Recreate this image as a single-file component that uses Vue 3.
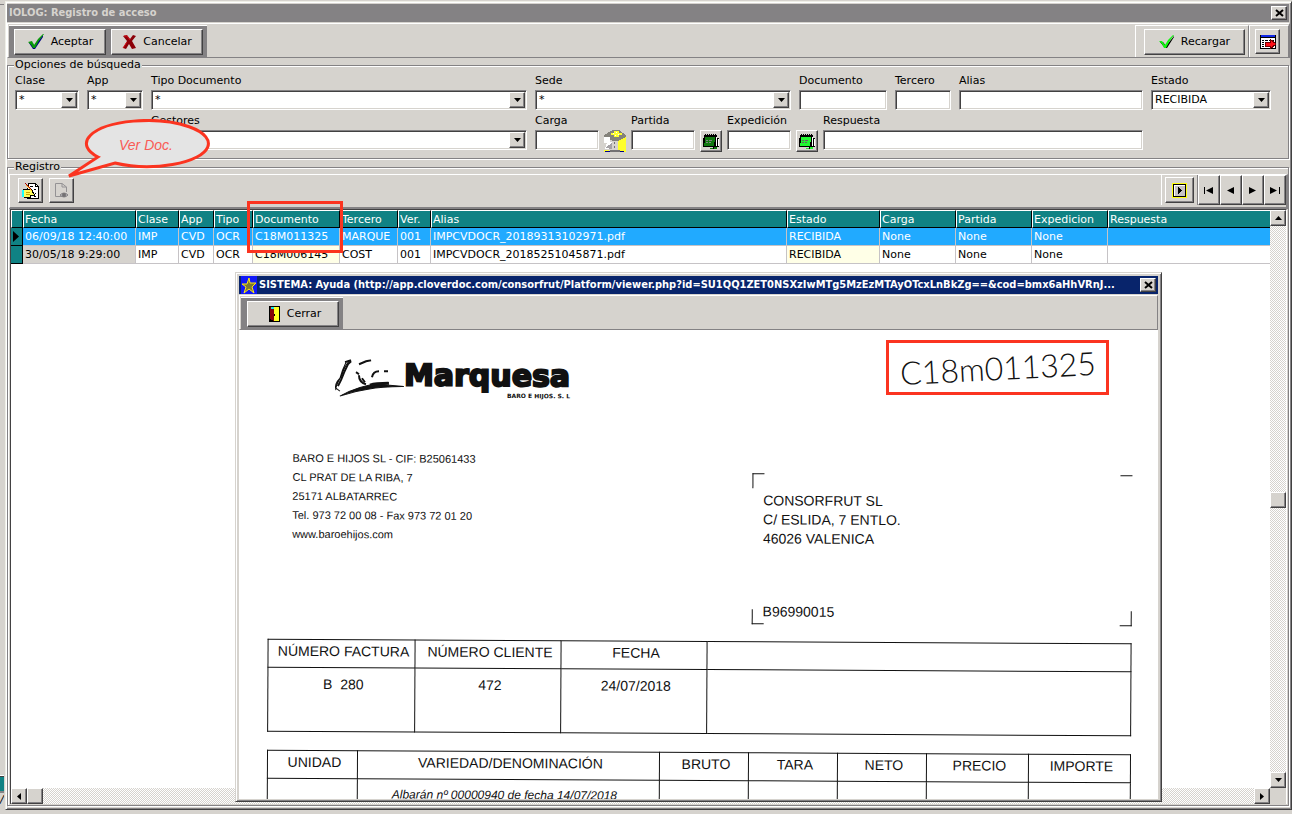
<script setup>
import { ref } from 'vue'

const topFields = [
  { id: 'clase', label: 'Clase', value: '*', select: true },
  { id: 'app', label: 'App', value: '*', select: true },
  { id: 'tipo', label: 'Tipo Documento', value: '*', select: true },
  { id: 'sede', label: 'Sede', value: '*', select: true },
  { id: 'documento', label: 'Documento', value: '' },
  { id: 'tercero', label: 'Tercero', value: '' },
  { id: 'alias', label: 'Alias', value: '' },
  { id: 'estado', label: 'Estado', value: 'RECIBIDA', select: true },
]

const columns = [
  { name: 'Fecha', cls: 'c-fecha' },
  { name: 'Clase', cls: 'c-clase' },
  { name: 'App', cls: 'c-app' },
  { name: 'Tipo', cls: 'c-tipo' },
  { name: 'Documento', cls: 'c-doc' },
  { name: 'Tercero', cls: 'c-tercero' },
  { name: 'Ver.', cls: 'c-ver' },
  { name: 'Alias', cls: 'c-alias' },
  { name: 'Estado', cls: 'c-estado' },
  { name: 'Carga', cls: 'c-short' },
  { name: 'Partida', cls: 'c-short' },
  { name: 'Expedicion', cls: 'c-short' },
  { name: 'Respuesta', cls: 'c-resp' },
]

const rows = [
  ['06/09/18 12:40:00', 'IMP', 'CVD', 'OCR', 'C18M011325', 'MARQUE', '001', 'IMPCVDOCR_20189313102971.pdf', 'RECIBIDA', 'None', 'None', 'None', ''],
  ['30/05/18 9:29:00', 'IMP', 'CVD', 'OCR', 'C18M006145', 'COST', '001', 'IMPCVDOCR_20185251045871.pdf', 'RECIBIDA', 'None', 'None', 'None', ''],
]
const selected = ref(0)

const navButtons = [
  { label: 'Primero', d: 'M0 0h1v7H0zM9 0v7L2 3.5z' },
  { label: 'Anterior', d: 'M8 0v7L1 3.5z' },
  { label: 'Siguiente', d: 'M1 0v7l7-3.5z' },
  { label: 'Último', d: 'M0 0v7l7-3.5zM9 0h1v7H9z' },
]

const lineHeads = ['UNIDAD', 'VARIEDAD/DENOMINACIÓN', 'BRUTO', 'TARA', 'NETO', 'PRECIO', 'IMPORTE']
</script>

<template>
  <div class="desktop">
    <div class="behind" aria-hidden="true"><i class="behind-top"></i><i class="behind-teal"></i><i class="behind-foot">/</i></div>

    <main class="window">
      <header class="titlebar">
        <h1>IOLOG: Registro de acceso</h1>
        <button class="close" aria-label="Cerrar ventana">
          <svg width="9" height="8" viewBox="0 0 9 8"><path d="M1 1l7 6M8 1L1 7" fill="none" stroke="#000" stroke-width="2" /></svg>
        </button>
      </header>

      <div class="toolbar">
        <div class="dark-group">
          <button class="btn wide">
            <svg width="18" height="16" viewBox="0 0 18 16">
              <path d="M2 9l4 0 1 3L16 1v2L8 15H6z" fill="#000084" />
              <path d="M1 8l4-1 2 4Q11 4 16 0h1Q11 7 8 14H6Q4 10 1 8z" fill="#089a08" />
            </svg>
            Aceptar
          </button>
          <button class="btn wide">
            <svg width="15" height="16" viewBox="0 0 15 16">
              <path d="M1 2l4-1 3 4 3-4 3 1-4 5 4 7-4 1-3-5-3 5-3-1 4-7z" fill="#8c0008" />
              <path d="M2 2l3 0 3 4M5 8l-4 6" fill="none" stroke="#d61018" stroke-width="1" />
            </svg>
            Cancelar
          </button>
        </div>
        <div class="tool-right">
          <div class="tool-cell">
            <button class="btn reload">
              <svg width="16" height="14" viewBox="0 0 16 14">
                <path d="M1 7h3l3 4L15 1v1L8 13H6z" fill="#000" />
                <path d="M0 6h3l3 4Q9 4 14 0h1Q10 6 7 13H5Q3 8 0 6z" fill="#10f710" />
              </svg>
              Recargar
            </button>
          </div>
          <div class="tool-cell last">
            <button class="btn square" aria-label="Exportar">
              <svg width="16" height="14" viewBox="0 0 16 14" shape-rendering="crispEdges">
                <path d="M0 0h16v14H0z" fill="#000" />
                <path d="M1 3h14v10H1z" fill="#fff" />
                <path d="M1 0h14v2H1z" fill="#1028e7" />
                <path d="M2 5h2v1H2zM5 5h3v1H5zM9 5h5v1H9zM2 7h2v1H2zM5 7h2v1H5zM2 9h2v1H2zM2 11h2v1H2z" fill="#000" />
                <path d="M5 7h5V4l6 5-6 5v-3H5z" fill="#ff1018" stroke="#730000" stroke-width="1" />
              </svg>
            </button>
          </div>
        </div>
      </div>

      <fieldset class="search">
        <legend>Opciones de búsqueda</legend>
        <div class="row-one">
          <div v-for="f in topFields" :key="f.id" class="field">
            <label :for="f.id">{{ f.label }}</label>
            <div v-if="f.select" class="combo">
              <select :id="f.id"><option>{{ f.value }}</option></select>
              <span class="arrow"><svg width="7" height="4" viewBox="0 0 7 4"><path d="M0 0h7L3.500 4z" /></svg></span>
            </div>
            <input v-else :id="f.id" type="text" :value="f.value">
          </div>
        </div>
        <div class="row-two">
          <div class="field gestores">
            <label for="gestores">Gestores</label>
            <div class="combo">
              <select id="gestores"><option></option></select>
              <span class="arrow"><svg width="7" height="4" viewBox="0 0 7 4"><path d="M0 0h7L3.500 4z" /></svg></span>
            </div>
          </div>
          <div class="lookup">
            <div class="field small"><label for="carga">Carga</label><input id="carga" type="text"></div>
            <button class="plain" aria-label="Buscar carga">
              <svg width="22" height="22" viewBox="0 0 22 22" shape-rendering="crispEdges">
                <path d="M0 0h22v22H0z" fill="#d6d3ce" />
                <path d="M0 5L9 0h6l7 5v2l-8 4H9L0 7z" fill="#84827b" />
                <path d="M0 7h6v6H0zM3 12h5v7H1z" fill="#fff" />
                <path d="M1 18l7-5v6z" fill="#a5a2a5" />
                <path d="M14 11l8-4v13l-8 1z" fill="#ffff29" />
                <path d="M7 3h3V1h5v2h3v2h-3v2h-5V5H7z" fill="#ffff29" />
                <path d="M9 3h1v1H9zM12 2h1v1h-1zM14 4h1v1h-1zM11 5h1v1h-1z" fill="#fff" />
                <path d="M0 20h5v2H0zM17 20h5v2h-5z" fill="#ffff29" />
                <path d="M1 21h5v1H1zM16 21h4v1h-4z" fill="#000084" />
                <path d="M6 20h10v2H6zM10 12h1v2h-1zM10 16h1v2h-1z" fill="#737173" />
              </svg>
            </button>
            <div class="field small"><label for="partida">Partida</label><input id="partida" type="text"></div>
            <button class="btn mini green" aria-label="Buscar partida">
              <svg width="17" height="17" viewBox="0 0 17 17" shape-rendering="crispEdges">
                <path d="M1 2h13v3h2v9h-2v2h-4v-2H0V5h1z" fill="#000" />
                <path d="M2 4h10v2l-1 7H1l1-6z" fill="currentColor" />
                <path d="M2 1h1v2H2zM4 1h1v2H4zM6 1h1v2H6zM8 1h1v2H8zM10 1h1v2h-1zM12 1h1v2h-1z" fill="#000" />
                <path d="M3 7h2v1H3zM6 7h3v1H6zM3 9h2v1H3zM6 9h2v1H6z" fill="#848284" />
                <path d="M13 4h1v9h-1zM15 6h1v7h-1z" fill="#fff" />
                <path d="M7 15h3v1H7zM11 14h3v2h-3z" fill="currentColor" />
              </svg>
            </button>
            <div class="field small"><label for="expedicion">Expedición</label><input id="expedicion" type="text"></div>
            <button class="btn mini lime" aria-label="Buscar expedición">
              <svg width="17" height="17" viewBox="0 0 17 17" shape-rendering="crispEdges">
                <path d="M1 2h13v3h2v9h-2v2h-4v-2H0V5h1z" fill="#000" />
                <path d="M2 4h10v2l-1 7H1l1-6z" fill="currentColor" />
                <path d="M2 1h1v2H2zM4 1h1v2H4zM6 1h1v2H6zM8 1h1v2H8zM10 1h1v2h-1zM12 1h1v2h-1z" fill="#000" />
                <path d="M3 7h2v1H3zM6 7h3v1H6zM3 9h2v1H3zM6 9h2v1H6z" fill="#636163" />
                <path d="M13 4h1v9h-1zM15 6h1v7h-1z" fill="#fff" />
                <path d="M7 15h3v1H7zM11 14h3v2h-3z" fill="currentColor" />
              </svg>
            </button>
            <div class="field grow"><label for="respuesta">Respuesta</label><input id="respuesta" type="text"></div>
          </div>
        </div>
      </fieldset>

      <fieldset class="registry">
        <legend>Registro</legend>
        <div class="registry-tools">
          <button class="btn square" aria-label="Editar registro">
            <svg width="17" height="17" viewBox="0 0 17 17" shape-rendering="crispEdges">
              <path d="M7 1h6l3 3v12H5v-4z" fill="#fff" stroke="#000" />
              <path d="M13 1v3h3M8 4h3M8 7h2M12 7h2M10 10h2M13 11h1M8 13h3M12 14h2" fill="none" stroke="#000" />
              <path d="M1 7h6l3 1v2l3 3-2 1-3-1v2H2z" fill="#ffff5a" stroke="#000" />
              <path d="M0 8h2v7H0z" fill="#18ffff" />
              <path d="M3 1l6 6" stroke="#a50000" stroke-width="1" />
              <path d="M4 3l6 6" stroke="#ffb210" stroke-width="1" />
              <path d="M4 10h4M4 12h4" stroke="#c6a200" stroke-width="1" />
            </svg>
          </button>
          <button class="btn square" aria-label="Ver documento">
            <svg width="16" height="17" viewBox="0 0 16 17">
              <path d="M8 14.500H1.500v-13H8L12.500 5v5M8 1.500V5h4.500" fill="none" stroke="#949294" />
              <path d="M6 13q4-4 8 0-4 4-8 0z" fill="#bdbabd" stroke="#848284" />
              <circle cx="10" cy="13" r="2" fill="#737173" />
            </svg>
          </button>
          <div class="nav">
            <div class="nav-cell">
              <button class="btn play" aria-label="Ejecutar">
                <svg width="15" height="15" viewBox="0 0 15 15" shape-rendering="crispEdges">
                  <path d="M0 0h15v15H0z" fill="#ffff10" /><path d="M1 1h13v13H1z" /><path d="M2 2h11v11H2z" fill="#fff" /><path d="M3 3h10v10H3z" fill="#c6c3c6" /><path d="M6 4v7l4-3.500z" />
                </svg>
              </button>
            </div>
            <button v-for="n in navButtons" :key="n.label" class="btn step" :aria-label="n.label">
              <svg width="10" height="7" viewBox="0 0 10 7"><path :d="n.d" /></svg>
            </button>
          </div>
        </div>

        <div class="grid">
          <div class="grid-main">
            <table>
              <colgroup>
                <col class="c-mark"><col v-for="c in columns" :key="c.name" :class="c.cls">
              </colgroup>
              <thead>
                <tr><th></th><th v-for="c in columns" :key="c.name" scope="col">{{ c.name }}</th></tr>
              </thead>
              <tbody>
                <tr v-for="(r, i) in rows" :key="r[4]" :class="{ active: i === selected }" @click="selected = i">
                  <td class="mark"><svg v-if="i === selected" width="6" height="11" viewBox="0 0 6 11"><path d="M0 0v11l6-5.500z" /></svg></td>
                  <td v-for="(v, k) in r" :key="k" :class="{ gray: k === 0, cream: k === 4 || k === 8 }">{{ v }}</td>
                </tr>
              </tbody>
            </table>
            <div class="hbar">
              <button class="btn sb" aria-label="Izquierda"><svg width="4" height="7" viewBox="0 0 4 7"><path d="M4 0v7L0 3.500z" /></svg></button>
              <span class="btn sb"></span>
              <i></i>
              <button class="btn sb" aria-label="Derecha"><svg width="4" height="7" viewBox="0 0 4 7"><path d="M0 0v7l4-3.500z" /></svg></button>
            </div>
          </div>
          <div class="vbar">
            <button class="btn sb" aria-label="Arriba"><svg width="7" height="4" viewBox="0 0 7 4"><path d="M0 4h7L3.500 0z" /></svg></button>
            <i></i>
            <span class="btn sb"></span>
            <i class="low"></i>
            <button class="btn sb" aria-label="Abajo"><svg width="7" height="4" viewBox="0 0 7 4"><path d="M0 0h7L3.500 4z" /></svg></button>
            <b class="corner"></b>
          </div>
        </div>
      </fieldset>
    </main>

    <section class="dialog" role="dialog" aria-labelledby="viewer-title">
      <header class="titlebar blue">
        <svg class="star" width="16" height="18" viewBox="0 0 16 18">
          <path d="M0 0h16v18H0z" fill="#1018f7" />
          <path d="M8 2l1 5 6 0-4 4 2 6-5-4-5 4 2-6-4-3h5z" fill="#7b7931" stroke="#ffe710" stroke-width="1" />
        </svg>
        <h2 id="viewer-title">SISTEMA: Ayuda (http://app.cloverdoc.com/consorfrut/Platform/viewer.php?id=SU1QQ1ZET0NSXzIwMTg5MzEzMTAyOTcxLnBkZg==&amp;cod=bmx6aHhVRnJ...</h2>
        <button class="close" aria-label="Cerrar visor">
          <svg width="9" height="8" viewBox="0 0 9 8"><path d="M1 1l7 6M8 1L1 7" fill="none" stroke="#000" stroke-width="2" /></svg>
        </button>
      </header>
      <div class="dialog-tools">
        <div class="dark-group">
          <button class="btn wide">
            <svg width="16" height="16" viewBox="0 0 16 16" shape-rendering="crispEdges">
              <path d="M4 0h11v16H4z" fill="#000" />
              <path d="M8 1h6v14H8z" fill="#ffff21" />
              <path d="M5 1l4 2v12l-4-2z" fill="#840008" />
              <path d="M6 1h3v2H6z" fill="#18e7e7" />
              <path d="M9 8h1v2H9z" fill="#000" />
            </svg>
            Cerrar
          </button>
        </div>
      </div>
      <div class="viewer">
        <article class="sheet">
          <div class="logo">
            <svg width="70" height="42" viewBox="0 0 70 42" fill="none" stroke="#111">
              <path d="M15 2q-5 6-7 14-5 8-6 13l4 3M12 3Q8 11 6 19 0 25 2 31" stroke-width="1" />
              <path d="M17 2l-3 3q-4 8-7 16l-3 6" stroke-width="2" />
              <path d="M11 3l6-2M25 5l7-3 5-1M22 13l3 2M25 16q0 7 7 9M28 19l3 4M38 18q1-6 7-6M50 12l4 0" stroke-width="2" />
              <path d="M6 37q20-11 38-12l26 2q-22 0-36 3Q20 32 6 37z" fill="#111" stroke-width="1" />
              <path d="M36 26q6-2 19-2" stroke-width="3" />
            </svg>
            <div class="brand"><strong>Marquesa</strong><small>BARO E HIJOS. S. L</small></div>
          </div>
          <div class="parties">
            <address>
              BARO E HIJOS SL - CIF: B25061433<br>CL PRAT DE LA RIBA, 7<br>25171 ALBATARREC<br>Tel. 973 72 00 08 - Fax 973 72 01 20<br>www.baroehijos.com
            </address>
            <div class="recipient">
              <p>CONSORFRUT SL<br>C/ ESLIDA, 7 ENTLO.<br>46026 VALENICA</p>
              <p>B96990015</p>
            </div>
          </div>
          <table class="ink invoice">
            <colgroup><col class="i1"><col class="i2"><col class="i2"><col></colgroup>
            <thead><tr><th>NÚMERO FACTURA</th><th>NÚMERO CLIENTE</th><th>FECHA</th><th></th></tr></thead>
            <tbody><tr><td>B&nbsp; 280</td><td>472</td><td>24/07/2018</td><td></td></tr></tbody>
          </table>
          <table class="ink lines">
            <colgroup><col class="l1"><col><col class="l3"><col class="l3"><col class="l3"><col class="l6"><col class="l6"></colgroup>
            <thead><tr><th v-for="h in lineHeads" :key="h">{{ h }}</th></tr></thead>
            <tbody><tr><td></td><td class="note">Albarán nº 00000940 de fecha 14/07/2018</td><td></td><td></td><td></td><td></td><td></td></tr></tbody>
          </table>
        </article>
        <div class="handnote"><span>C18m011325</span></div>
      </div>
    </section>

    <div class="highlight" aria-hidden="true"></div>
    <div class="callout">
      <svg width="150" height="62" viewBox="0 0 150 62">
        <path d="M32 38A61 23 0 1 1 49 44L3 57z" fill="#e4e4e4" stroke="#fb3420" stroke-width="3" />
      </svg>
      <span>Ver Doc.</span>
    </div>
  </div>
</template>

<style>
body { background: #d6d3ce; }
</style>

<style scoped>
* { box-sizing: border-box; }
.desktop {
  position: relative;
  display: flex;
  min-height: 100vh;
  padding: 1px 0 4px;
  background: #d6d3ce;
  font: 11px/14px Verdana, "DejaVu Sans", sans-serif;
  color: #000;
  overflow: hidden;
}
h1, h2, p { margin: 0; font: inherit; }
button, input, select { font: inherit; color: inherit; margin: 0; border-radius: 0; }
svg { display: block; flex: none; }

.behind { width: 5px; flex: none; display: flex; flex-direction: column; padding-right: 1px; }
.behind-top { flex: 1; background: linear-gradient(#848284, #848284) 0 3px / 100% 1px no-repeat; border-bottom: 1px solid #fff; }
.behind-teal { height: 15px; background: #108284; border-top: 1px solid #424142; }
.behind-foot { height: 19px; overflow: hidden; border-top: 2px solid #848284; }

.window {
  flex: 1;
  min-width: 0;
  display: flex;
  flex-direction: column;
  padding: 1px 1px 2px 1px;
  border: 1px solid;
  border-color: #efefe7 #424142 #424142 #efefe7;
  box-shadow: inset 1px 1px 0 #fff, inset -1px -1px 0 #848284;
}
.titlebar {
  display: flex;
  align-items: center;
  height: 18px;
  margin: 1px 1px 1px 0;
  padding: 0 2px;
  background: #848284;
  color: #d6d3ce;
  flex: none;
}
.titlebar h1, .titlebar h2 {
  flex: 1;
  min-width: 0;
  font: bold 11px/18px Tahoma, "DejaVu Sans Condensed", "DejaVu Sans", sans-serif;
  white-space: nowrap;
  overflow: hidden;
}
.close {
  width: 16px; height: 14px; flex: none; padding: 0;
  display: grid; place-items: center;
  background: #d6d3ce; color: #000;
  border: 1px solid; border-color: #fff #424142 #424142 #fff;
  box-shadow: inset -1px -1px 0 #848284;
}
.btn {
  display: flex; align-items: center; justify-content: center;
  padding: 0; gap: 6px;
  background: #d6d3ce;
  border: 1px solid; border-color: #fff #424142 #424142 #fff;
  box-shadow: inset -1px -1px 0 #848284;
}
.wide { width: 92px; height: 26px; }
.reload { width: 101px; height: 26px; }
.square { width: 25px; height: 25px; }
.mini { width: 22px; height: 22px; flex: none; }
.plain { width: 22px; height: 22px; padding: 0; border: 0; flex: none; }
.green { color: #107910; }
.lime { color: #21f731; }

.toolbar {
  display: flex;
  justify-content: space-between;
  height: 35px;
  border-top: 1px solid #fff;
  border-bottom: 1px solid #848284;
  border-left: 1px solid #fff;
  border-right: 1px solid #848284;
  flex: none;
}
.dark-group {
  display: flex; align-items: center; gap: 5px;
  margin: 1px 0 0 1px; padding: 0 4px 0 5px;
  background: #848284;
  border-top: 1px solid #fff;
}
.tool-right { display: flex; padding-top: 1px; }
.tool-cell { display: flex; align-items: center; padding: 0 3px 0 8px; border-top: 1px solid #fff; border-left: 1px solid #fff; border-right: 1px solid #848284; }
.tool-cell.last { padding: 0 8px 0 5px; }

fieldset {
  margin: 0 1px 1px 0;
  padding: 0;
  min-width: 0;
  border: 1px solid #848284;
  box-shadow: 1px 1px 0 #fff, inset 1px 1px 0 #fff;
}
legend { padding: 0 1px; line-height: 14px; background: #d6d3ce; }
.search { padding: 2px 17px 8px 7px; flex: none; }
.search legend { margin-left: -1px; }
.registry legend { margin-left: 5px; }
.row-one { display: grid; gap: 8px; grid-template-columns: minmax(0, 64fr) minmax(0, 56fr) minmax(0, 376fr) minmax(0, 256fr) minmax(0, 88fr) minmax(0, 56fr) minmax(0, 184fr) minmax(0, 120fr); }
.row-two { display: grid; gap: 8px; grid-template-columns: minmax(0, 128fr) minmax(0, 376fr) minmax(0, 608fr) minmax(0, 120fr); margin-top: 4px; }
.gestores { grid-column: 2; }
.lookup { display: flex; gap: 5px; align-items: flex-end; }
.lookup .plain, .lookup .mini { margin-bottom: -2px; }
.field { display: flex; flex-direction: column; min-width: 0; }
.field.small { width: 64px; }
.field.grow { flex: 1; }
.field label { height: 16px; line-height: 14px; }
.field input, .combo select {
  width: 100%; height: 20px; padding: 0 3px;
  background: #fff;
  border: 1px solid; border-color: #848284 #fff #fff #848284;
  box-shadow: inset 1px 1px 0 #424142, inset -1px -1px 0 #d6d3ce;
  outline: 0;
}
.combo { position: relative; }
.combo select { appearance: none; display: block; }
.arrow {
  position: absolute; top: 2px; right: 2px; width: 16px; height: 16px;
  display: grid; place-items: center; pointer-events: none;
  background: #d6d3ce; border: 1px solid; border-color: #fff #424142 #424142 #fff;
  box-shadow: inset -1px -1px 0 #848284;
}

.registry { flex: 1; display: flex; flex-direction: column; padding: 0 0 1px 1px; }
.registry-tools {
  display: flex; align-items: center; gap: 6px;
  height: 35px; flex: none;
  padding: 0 0 2px 8px;
  border-top: 1px solid #fff; border-left: 1px solid #fff;
  border-right: 2px solid #848284; border-bottom: 2px solid #848284;
}
.nav { display: flex; margin-left: auto; align-self: stretch; }
.nav-cell { display: flex; align-items: center; padding: 0 3px; border-left: 1px solid #fff; border-right: 1px solid #848284; }
.play { width: 29px; height: 26px; }
.step { width: 22px; }

.grid { flex: 1; display: flex; min-height: 0; background: #fff; border-left: 1px solid #424142; border-top: 1px solid #424142; border-right: 1px solid #fff; margin: 0 1px; }
.grid-main { flex: 1; min-width: 0; display: flex; flex-direction: column; justify-content: space-between; }
.grid table { width: 100%; table-layout: fixed; border-collapse: separate; border-spacing: 0; }
.c-mark { width: 12px; } .c-fecha { width: 113px; } .c-clase { width: 43px; } .c-app { width: 35px; }
.c-tipo { width: 39px; } .c-doc { width: 87px; } .c-tercero { width: 58px; } .c-ver { width: 33px; }
.c-estado { width: 93px; } .c-short { width: 76px; } .c-resp { width: 162px; }
.grid th {
  height: 18px; padding: 0 0 0 1px; text-align: left; font-weight: normal; line-height: 15px;
  background: #108284; color: #fff; white-space: nowrap; overflow: hidden;
  border-top: 1px solid #fff; border-left: 1px solid #fff; border-right: 1px solid #000; border-bottom: 1px solid #000;
}
.grid td {
  height: 18px; padding: 0 0 0 2px; line-height: 16px; white-space: nowrap; overflow: hidden;
  border-right: 1px solid #c6c3c6; border-bottom: 1px solid #c6c3c6;
}
.grid td.gray { background: #d6d3ce; }
.grid td.cream { background: #ffffe7; }
.grid tr.active td { background: #21aaff; color: #fff; }
.grid td.mark, .grid tr.active td.mark { background: #108284; color: #000; padding: 0 0 0 2px; border-right-color: #000; border-bottom-color: #000; }
.grid th:last-child, .grid td:last-child { border-right: 0; }
.sb { width: 16px; height: 16px; flex: none; }
.hbar { display: flex; height: 16px; }
.vbar { display: flex; flex-direction: column; width: 16px; flex: none; }
.hbar i, .vbar i { flex: 1; background: conic-gradient(#fff 25%, #d6d3ce 0 50%, #fff 0 75%, #d6d3ce 0) 0 0 / 2px 2px; }
.vbar .low { flex: 0 1 264px; }
.corner { height: 16px; background: #d6d3ce; }

.dialog {
  position: absolute;
  left: 235px; right: 130px; top: 272px; bottom: 12px;
  display: flex; flex-direction: column;
  padding: 2px;
  background: #d6d3ce;
  border: 1px solid; border-color: #d6d3ce #424142 #424142 #d6d3ce;
  box-shadow: inset 1px 1px 0 #fff, inset -1px -1px 0 #848284;
}
.titlebar.blue { background: #08246b; color: #fff; margin: 1px 1px 1px 1px; padding: 0 2px; }
.star { margin-right: 2px; }
.dialog-tools { display: flex; height: 35px; flex: none; margin: 0 1px; border: 1px solid; border-color: #fff #848284 #848284 #fff; }
.dialog-tools .dark-group { padding-left: 6px; }
.viewer { position: relative; flex: 1; min-height: 0; overflow: hidden; background: #fff; margin: 0 1px; }

/* The invoice was scanned slightly askew */
.sheet {
  height: 100%;
  padding: 31px 26px 0 29px;
  transform: rotate(0.3deg);
  font: 14px/19px Arial, "Liberation Sans", sans-serif;
  color: #111;
}
.logo { display: flex; height: 42px; margin-left: 65px; }
.brand { display: flex; flex-direction: column; align-items: flex-end; }
.brand strong { font: bold 30px/32px "DejaVu Sans", sans-serif; -webkit-text-stroke: 2px #111; }
.brand small { font: bold 6px/8px "DejaVu Sans", sans-serif; }
.parties { display: flex; justify-content: space-between; margin-top: 48px; }
address { font: normal 11px/19px Arial, "Liberation Sans", sans-serif; padding-left: 24px; white-space: nowrap; }
.recipient {
  width: 44%; height: 151px; margin-top: 22px; padding: 18px 0 3px 11px;
  display: flex; flex-direction: column; justify-content: space-between;
  background:
    linear-gradient(#111, #111) 0 0 / 12px 1px,
    linear-gradient(#111, #111) 0 0 / 1px 15px,
    linear-gradient(#111, #111) 100% 0 / 12px 1px,
    linear-gradient(#111, #111) 0 100% / 12px 1px,
    linear-gradient(#111, #111) 0 100% / 1px 15px,
    linear-gradient(#111, #111) 100% 100% / 12px 1px,
    linear-gradient(#111, #111) 100% 100% / 1px 15px;
  background-repeat: no-repeat;
}
.ink { width: 100%; table-layout: fixed; border-collapse: collapse; margin-top: 17px; text-align: center; }
.ink th, .ink td { border: 1px solid #111; padding: 0; font-weight: normal; white-space: nowrap; }
.ink th { height: 28px; padding: 0 0 4px 4px; }
.ink td { height: 64px; padding: 7px 0 0 4px; vertical-align: top; }
.i1 { width: 147px; } .i2 { width: 146px; }
.l1 { width: 90px; } .l3 { width: 89px; } .l6 { width: 102px; }
.ink td.note { font-style: italic; font-size: 12px; text-align: left; padding: 6px 0 0 34px; }
.ink.lines { margin-top: 18px; }

.handnote {
  position: absolute; right: 49px; top: 10px; width: 223px; height: 55px;
  display: grid; place-items: center;
  border: 3px solid #fb3420;
  font: 300 32px/40px Lato, "Open Sans", sans-serif; color: #111;
}
.handnote span { transform: rotate(-3deg); }
.highlight { position: absolute; left: 247px; top: 201px; width: 96px; height: 52px; border: 3px solid #fb3420; }
.callout { position: absolute; left: 66px; top: 119px; width: 150px; }
.callout span { position: absolute; left: 53px; top: 17px; font: italic 14px/18px Arial, "Liberation Sans", sans-serif; color: #f95b56; }
</style>
